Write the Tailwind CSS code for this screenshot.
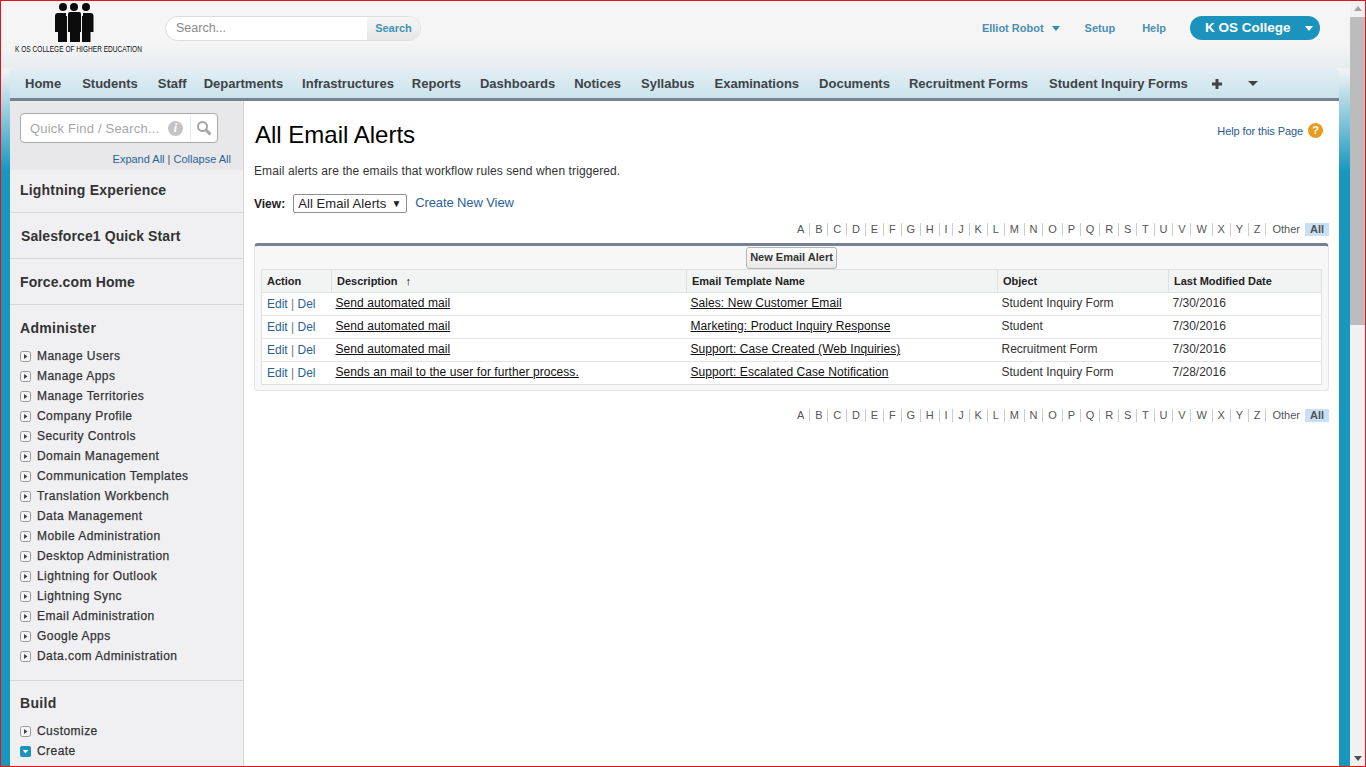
<!DOCTYPE html>
<html lang="en">
<head>
  <meta charset="UTF-8" />
  <title>All Email Alerts</title>
  <script src="https://cdn.jsdelivr.net/npm/@tailwindcss/browser@4"></script>
</head>
<body class="h-[767px] overflow-hidden font-['Liberation_Sans',Arial,sans-serif] text-[12px] text-[#222]">
<div class="relative flex h-[767px] flex-col overflow-hidden border border-[#e0161e] bg-[linear-gradient(#eef2f4_0,#eef2f4_70px,#1797c0_170px)] pr-[15px]">

  <!-- page scrollbar -->
  <div class="absolute top-0 right-0 bottom-0 flex w-[15px] flex-col bg-[#f1f1f1]">
    <div class="mx-auto mt-[5px] h-0 w-0 border-x-[4px] border-b-[5px] border-x-transparent border-b-[#a3a3a3]"></div>
    <div class="mt-[6px] h-[308px] w-[15px] bg-[#bcbcbc]"></div>
    <div class="mx-auto mt-auto mb-[5px] h-0 w-0 border-x-[4px] border-t-[5px] border-x-transparent border-t-[#505050]"></div>
  </div>

  <!-- header -->
  <header class="flex h-[67px] shrink-0 items-start bg-[linear-gradient(#f5f5f6_0,#f5f5f6_42px,#e8ecee_67px)]">
    <div class="flex w-[164px] shrink-0 flex-col items-start pl-[14px]">
      <svg class="mt-[1px] ml-[39px] h-[41px] w-[40px]" viewBox="0 0 40 41" fill="#0c0c0c">
        <circle cx="9" cy="5" r="4"/><circle cx="20" cy="5" r="4"/><circle cx="32" cy="5" r="4"/>
        <path d="M1 14q0-3 3-3h8v3h1v26H4V30H1z"/>
        <path d="M39.500 14q0-3-3-3H29v3h-1v26h8.500V30h3z"/>
        <path d="M14 12q0-2 2-2h9q2 0 2 2v18h-1v10H16V30h-2z"/>
      </svg>
      <span class="mt-[1px] origin-left scale-x-[0.73] text-[9px] leading-[10px] whitespace-nowrap text-[#111]">K OS COLLEGE OF HIGHER EDUCATION</span>
    </div>
    <div class="mt-[15px] flex h-[25px] w-[256px] overflow-hidden rounded-full border border-[#dcdcdc] bg-white">
      <span class="flex-1 pl-[10px] text-[12.5px] leading-[22px] text-[#8a8a8a]">Search...</span>
      <span class="w-[53px] bg-[linear-gradient(#f6f6f6,#e6e6e6)] text-center text-[11px] leading-[23px] font-bold text-[#3f94b8]">Search</span>
    </div>
    <nav class="ml-auto flex items-center pt-[15px] text-[11px] font-bold text-[#4a8fb0]">
      <span class="leading-[23px]">Elliot Robot</span>
      <span class="ml-[8px] h-0 w-0 border-x-[4px] border-t-[5px] border-x-transparent border-t-[#2f8db3]"></span>
      <span class="ml-[25px] leading-[23px]">Setup</span>
      <span class="ml-[27px] leading-[23px]">Help</span>
      <div class="mr-[30px] ml-[24px] flex h-[24px] w-[130px] items-center rounded-full bg-[#1b93bd] pl-[15px] text-[13.5px] text-white">
        <span>K OS College</span>
        <span class="mr-[7px] ml-auto h-0 w-0 border-x-[4px] border-t-[5px] border-x-transparent border-t-white"></span>
      </div>
    </nav>
  </header>

  <!-- tabs -->
  <div class="relative mr-[11px] ml-[9px] flex h-[33px] shrink-0 items-center rounded-t-[5px] border-b-[3px] border-[#76828f] bg-[linear-gradient(#e2eff4,#cbe3ec)] pt-[1px] pl-[15px] text-[13px] font-bold text-[#3f4347]">
    <span class="mr-[21px]">Home</span>
    <span class="mr-[20px]">Students</span>
    <span class="mr-[17px]">Staff</span>
    <span class="mr-[19px]">Departments</span>
    <span class="mr-[18px]">Infrastructures</span>
    <span class="mr-[19px]">Reports</span>
    <span class="mr-[19px]">Dashboards</span>
    <span class="mr-[20px]">Notices</span>
    <span class="mr-[20px]">Syllabus</span>
    <span class="mr-[20px]">Examinations</span>
    <span class="mr-[19px]">Documents</span>
    <span class="mr-[21px]">Recruitment Forms</span>
    <span class="mr-[24px]">Student Inquiry Forms</span>
    <svg class="h-[10px] w-[10px]" viewBox="0 0 10 10" fill="#3f4347"><path d="M3.500 0h3v3.500H10v3H6.500V10h-3V6.500H0v-3h3.500z"/></svg>
    <span class="ml-[26px] h-0 w-0 border-x-[5px] border-t-[5px] border-x-transparent border-t-[#3f4347]"></span>
  </div>

  <!-- main -->
  <div class="mr-[11px] ml-[9px] flex min-h-0 flex-1 bg-white">

    <!-- sidebar -->
    <aside class="w-[234px] shrink-0 border-r-[1px] border-[#d4d4d6] bg-[#f0f0f3] text-[#333]">
      <div class="h-[69px] bg-[#e8e8ea] px-[10px] pt-[12px]">
        <div class="flex h-[30px] w-[198px] items-center rounded-[4px] border border-[#a9a9a9] bg-white pl-[9px]">
          <span class="flex-1 pt-[2px] text-[13px] tracking-[0.2px] whitespace-nowrap text-[#a7a7a7]">Quick Find / Search...</span>
          <span class="mr-[7px] flex h-[15px] w-[15px] items-center justify-center rounded-full bg-[#c4c4c4] font-['Liberation_Serif',serif] text-[12px] font-bold text-white italic">i</span>
          <span class="flex h-full w-[27px] items-center justify-center border-l border-[#ececec]">
            <svg class="h-[16px] w-[16px]" viewBox="0 0 16 16" fill="none" stroke="#a5a5a5"><circle cx="6.500" cy="6.500" r="4.500" stroke-width="2"/><path d="M10 10l4.500 4.500" stroke-width="3"/></svg>
          </span>
        </div>
        <div class="mt-[9px] pr-[2px] text-right text-[11px] leading-[14px] text-[#2a6496]">Expand All <span class="text-[#555]">|</span> Collapse All</div>
      </div>
      <div class="h-[43px] border-b border-[#d8d8da] pl-[10px] text-[14px] leading-[40px] font-bold tracking-[0.2px]">Lightning Experience</div>
      <div class="mt-[3px] h-[43px] border-b border-[#d8d8da] pl-[11px] text-[14px] leading-[40px] font-bold tracking-[0.1px]">Salesforce1 Quick Start</div>
      <div class="mt-[3px] h-[43px] border-b border-[#d8d8da] pl-[10px] text-[14px] leading-[40px] font-bold tracking-[0.1px]">Force.com Home</div>

      <h2 class="mt-[3px] h-[38px] pl-[10px] text-[14px] leading-[40px] font-bold tracking-[0.3px]">Administer</h2>
      <ul class="h-[335px] border-b border-[#d8d8da] pl-[10px] text-[12px] tracking-[0.45px] [-webkit-text-stroke:0.25px_#333]">
        <li class="flex h-[20px] items-center"><svg class="mr-[6px] h-[11px] w-[11px]" viewBox="0 0 11 11"><rect x=".5" y=".5" width="10" height="10" rx="2" fill="#f5f5f5" stroke="#999"/><path d="M4 3l3.500 2.500L4 8z" fill="#444"/></svg>Manage Users</li>
        <li class="flex h-[20px] items-center"><svg class="mr-[6px] h-[11px] w-[11px]" viewBox="0 0 11 11"><rect x=".5" y=".5" width="10" height="10" rx="2" fill="#f5f5f5" stroke="#999"/><path d="M4 3l3.500 2.500L4 8z" fill="#444"/></svg>Manage Apps</li>
        <li class="flex h-[20px] items-center"><svg class="mr-[6px] h-[11px] w-[11px]" viewBox="0 0 11 11"><rect x=".5" y=".5" width="10" height="10" rx="2" fill="#f5f5f5" stroke="#999"/><path d="M4 3l3.500 2.500L4 8z" fill="#444"/></svg>Manage Territories</li>
        <li class="flex h-[20px] items-center"><svg class="mr-[6px] h-[11px] w-[11px]" viewBox="0 0 11 11"><rect x=".5" y=".5" width="10" height="10" rx="2" fill="#f5f5f5" stroke="#999"/><path d="M4 3l3.500 2.500L4 8z" fill="#444"/></svg>Company Profile</li>
        <li class="flex h-[20px] items-center"><svg class="mr-[6px] h-[11px] w-[11px]" viewBox="0 0 11 11"><rect x=".5" y=".5" width="10" height="10" rx="2" fill="#f5f5f5" stroke="#999"/><path d="M4 3l3.500 2.500L4 8z" fill="#444"/></svg>Security Controls</li>
        <li class="flex h-[20px] items-center"><svg class="mr-[6px] h-[11px] w-[11px]" viewBox="0 0 11 11"><rect x=".5" y=".5" width="10" height="10" rx="2" fill="#f5f5f5" stroke="#999"/><path d="M4 3l3.500 2.500L4 8z" fill="#444"/></svg>Domain Management</li>
        <li class="flex h-[20px] items-center"><svg class="mr-[6px] h-[11px] w-[11px]" viewBox="0 0 11 11"><rect x=".5" y=".5" width="10" height="10" rx="2" fill="#f5f5f5" stroke="#999"/><path d="M4 3l3.500 2.500L4 8z" fill="#444"/></svg>Communication Templates</li>
        <li class="flex h-[20px] items-center"><svg class="mr-[6px] h-[11px] w-[11px]" viewBox="0 0 11 11"><rect x=".5" y=".5" width="10" height="10" rx="2" fill="#f5f5f5" stroke="#999"/><path d="M4 3l3.500 2.500L4 8z" fill="#444"/></svg>Translation Workbench</li>
        <li class="flex h-[20px] items-center"><svg class="mr-[6px] h-[11px] w-[11px]" viewBox="0 0 11 11"><rect x=".5" y=".5" width="10" height="10" rx="2" fill="#f5f5f5" stroke="#999"/><path d="M4 3l3.500 2.500L4 8z" fill="#444"/></svg>Data Management</li>
        <li class="flex h-[20px] items-center"><svg class="mr-[6px] h-[11px] w-[11px]" viewBox="0 0 11 11"><rect x=".5" y=".5" width="10" height="10" rx="2" fill="#f5f5f5" stroke="#999"/><path d="M4 3l3.500 2.500L4 8z" fill="#444"/></svg>Mobile Administration</li>
        <li class="flex h-[20px] items-center"><svg class="mr-[6px] h-[11px] w-[11px]" viewBox="0 0 11 11"><rect x=".5" y=".5" width="10" height="10" rx="2" fill="#f5f5f5" stroke="#999"/><path d="M4 3l3.500 2.500L4 8z" fill="#444"/></svg>Desktop Administration</li>
        <li class="flex h-[20px] items-center"><svg class="mr-[6px] h-[11px] w-[11px]" viewBox="0 0 11 11"><rect x=".5" y=".5" width="10" height="10" rx="2" fill="#f5f5f5" stroke="#999"/><path d="M4 3l3.500 2.500L4 8z" fill="#444"/></svg>Lightning for Outlook</li>
        <li class="flex h-[20px] items-center"><svg class="mr-[6px] h-[11px] w-[11px]" viewBox="0 0 11 11"><rect x=".5" y=".5" width="10" height="10" rx="2" fill="#f5f5f5" stroke="#999"/><path d="M4 3l3.500 2.500L4 8z" fill="#444"/></svg>Lightning Sync</li>
        <li class="flex h-[20px] items-center"><svg class="mr-[6px] h-[11px] w-[11px]" viewBox="0 0 11 11"><rect x=".5" y=".5" width="10" height="10" rx="2" fill="#f5f5f5" stroke="#999"/><path d="M4 3l3.500 2.500L4 8z" fill="#444"/></svg>Email Administration</li>
        <li class="flex h-[20px] items-center"><svg class="mr-[6px] h-[11px] w-[11px]" viewBox="0 0 11 11"><rect x=".5" y=".5" width="10" height="10" rx="2" fill="#f5f5f5" stroke="#999"/><path d="M4 3l3.500 2.500L4 8z" fill="#444"/></svg>Google Apps</li>
        <li class="flex h-[20px] items-center"><svg class="mr-[6px] h-[11px] w-[11px]" viewBox="0 0 11 11"><rect x=".5" y=".5" width="10" height="10" rx="2" fill="#f5f5f5" stroke="#999"/><path d="M4 3l3.500 2.500L4 8z" fill="#444"/></svg>Data.com Administration</li>
      </ul>

      <h2 class="mt-[2px] h-[38px] pl-[10px] text-[14px] leading-[40px] font-bold tracking-[0.3px]">Build</h2>
      <ul class="pl-[10px] text-[12px] tracking-[0.45px] [-webkit-text-stroke:0.25px_#333]">
        <li class="flex h-[20px] items-center"><svg class="mr-[6px] h-[11px] w-[11px]" viewBox="0 0 11 11"><rect x=".5" y=".5" width="10" height="10" rx="2" fill="#f5f5f5" stroke="#999"/><path d="M4 3l3.500 2.500L4 8z" fill="#444"/></svg>Customize</li>
        <li class="flex h-[20px] items-center"><svg class="mr-[6px] h-[11px] w-[11px]" viewBox="0 0 11 11"><rect width="11" height="11" rx="2" fill="#1b93bd"/><path d="M2.800 4h5.400L5.500 7.500z" fill="#fff"/></svg>Create</li>
      </ul>
    </aside>

    <!-- content -->
    <main class="min-w-0 flex-1 pr-[10px] pl-[10px]">
      <div class="flex h-[62px] items-start justify-between">
        <h1 class="mt-[19px] ml-[1px] text-[24px] leading-[30px] text-black">All Email Alerts</h1>
        <div class="mt-[22px] flex items-center text-[11px] tracking-[-0.1px] text-[#1f5a8a]">
          Help for this Page
          <span class="mr-[6px] ml-[5px] flex h-[15px] w-[15px] -translate-y-[1px] items-center justify-center rounded-full bg-[#e89b1c] text-[11px] font-bold text-white">?</span>
        </div>
      </div>
      <p class="h-[17px] leading-[17px] tracking-[0.1px] text-[#333]">Email alerts are the emails that workflow rules send when triggered.</p>
      <div class="mt-[14px] flex h-[19px] items-center">
        <span class="font-bold">View:</span>
        <div class="ml-[8px] flex h-[19px] w-[114px] items-center rounded-[2px] border border-[#8f8f8f] bg-white pl-[4px] text-[13px] tracking-[0.1px] whitespace-nowrap">All Email Alerts<span class="ml-[5px] text-[10px]">▼</span></div>
        <span class="ml-[8px] -translate-y-[1px] text-[13px] tracking-[-0.1px] text-[#2a5f96]">Create New View</span>
      </div>

      <!-- letters -->
      <div class="mt-[10px] flex h-[13px] items-center justify-end text-[11px] leading-[13px] text-[#555]">
        <span class="border-r border-[#ccc] px-[4.9px]">A</span><span class="border-r border-[#ccc] px-[4.9px]">B</span><span class="border-r border-[#ccc] px-[4.9px]">C</span><span class="border-r border-[#ccc] px-[4.9px]">D</span><span class="border-r border-[#ccc] px-[4.9px]">E</span><span class="border-r border-[#ccc] px-[4.9px]">F</span><span class="border-r border-[#ccc] px-[4.9px]">G</span><span class="border-r border-[#ccc] px-[4.9px]">H</span><span class="border-r border-[#ccc] px-[4.9px]">I</span><span class="border-r border-[#ccc] px-[4.9px]">J</span><span class="border-r border-[#ccc] px-[4.9px]">K</span><span class="border-r border-[#ccc] px-[4.9px]">L</span><span class="border-r border-[#ccc] px-[4.9px]">M</span><span class="border-r border-[#ccc] px-[4.9px]">N</span><span class="border-r border-[#ccc] px-[4.9px]">O</span><span class="border-r border-[#ccc] px-[4.9px]">P</span><span class="border-r border-[#ccc] px-[4.9px]">Q</span><span class="border-r border-[#ccc] px-[4.9px]">R</span><span class="border-r border-[#ccc] px-[4.9px]">S</span><span class="border-r border-[#ccc] px-[4.9px]">T</span><span class="border-r border-[#ccc] px-[4.9px]">U</span><span class="border-r border-[#ccc] px-[4.9px]">V</span><span class="border-r border-[#ccc] px-[4.9px]">W</span><span class="border-r border-[#ccc] px-[4.9px]">X</span><span class="border-r border-[#ccc] px-[4.9px]">Y</span><span class="border-r border-[#ccc] px-[4.9px]">Z</span>
        <span class="pr-[5px] pl-[6px]">Other</span><span class="bg-[#c9dff5] px-[5px] font-bold">All</span>
      </div>

      <!-- list -->
      <section class="mt-[7px] h-[148px] rounded-[4px] border border-t-[3px] border-[#e4e4e4] border-t-[#76828f] bg-[#f7f7f8] px-[6px]">
        <div class="flex h-[23px] items-center justify-center">
          <button class="h-[22px] rounded-[3px] border border-[#b5b5b5] bg-[linear-gradient(#fdfdfd,#e8e8e8)] px-[3px] text-[11px] font-bold text-[#333]">New Email Alert</button>
        </div>
        <table class="w-full table-fixed border border-[#e0e0e0] bg-white text-[12px] text-[#333]">
          <colgroup><col class="w-[70px]"><col class="w-[355px]"><col class="w-[311px]"><col class="w-[171px]"><col></colgroup>
          <thead>
            <tr class="h-[23px] bg-[#f2f3f3] text-left text-[11px] font-bold text-[#222]">
              <th class="border-r border-[#e0e0e0] pl-[5px]">Action</th>
              <th class="border-r border-[#e0e0e0] pl-[5px]">Description <span class="ml-[5px] text-[11px] text-black">↑</span></th>
              <th class="border-r border-[#e0e0e0] pl-[5px]">Email Template Name</th>
              <th class="border-r border-[#e0e0e0] pl-[5px]">Object</th>
              <th class="pl-[5px]">Last Modified Date</th>
            </tr>
          </thead>
          <tbody>
            <tr class="h-[23px] border-t border-[#e3e3e3]">
              <td class="pl-[5px] text-[#2a5f96]">Edit <span class="text-[#777]">|</span> Del</td>
              <td class="pb-[2px] pl-[4px] tracking-[0.07px]"><span class="text-[#111] underline">Send automated mail</span></td>
              <td class="pb-[2px] pl-[4px] tracking-[0.07px]"><span class="text-[#111] underline">Sales: New Customer Email</span></td>
              <td class="pb-[2px] pl-[4px]">Student Inquiry Form</td>
              <td class="pb-[2px] pl-[4px]">7/30/2016</td>
            </tr>
            <tr class="h-[23px] border-t border-[#e3e3e3]">
              <td class="pl-[5px] text-[#2a5f96]">Edit <span class="text-[#777]">|</span> Del</td>
              <td class="pb-[2px] pl-[4px] tracking-[0.07px]"><span class="text-[#111] underline">Send automated mail</span></td>
              <td class="pb-[2px] pl-[4px] tracking-[0.07px]"><span class="text-[#111] underline">Marketing: Product Inquiry Response</span></td>
              <td class="pb-[2px] pl-[4px]">Student</td>
              <td class="pb-[2px] pl-[4px]">7/30/2016</td>
            </tr>
            <tr class="h-[23px] border-t border-[#e3e3e3]">
              <td class="pl-[5px] text-[#2a5f96]">Edit <span class="text-[#777]">|</span> Del</td>
              <td class="pb-[2px] pl-[4px] tracking-[0.07px]"><span class="text-[#111] underline">Send automated mail</span></td>
              <td class="pb-[2px] pl-[4px] tracking-[0.07px]"><span class="text-[#111] underline">Support: Case Created (Web Inquiries)</span></td>
              <td class="pb-[2px] pl-[4px]">Recruitment Form</td>
              <td class="pb-[2px] pl-[4px]">7/30/2016</td>
            </tr>
            <tr class="h-[23px] border-t border-[#e3e3e3]">
              <td class="pl-[5px] text-[#2a5f96]">Edit <span class="text-[#777]">|</span> Del</td>
              <td class="pb-[2px] pl-[4px] tracking-[0.07px]"><span class="text-[#111] underline">Sends an mail to the user for further process.</span></td>
              <td class="pb-[2px] pl-[4px] tracking-[0.07px]"><span class="text-[#111] underline">Support: Escalated Case Notification</span></td>
              <td class="pb-[2px] pl-[4px]">Student Inquiry Form</td>
              <td class="pb-[2px] pl-[4px]">7/28/2016</td>
            </tr>
          </tbody>
        </table>
      </section>

      <div class="mt-[18px] flex h-[13px] items-center justify-end text-[11px] leading-[13px] text-[#555]">
        <span class="border-r border-[#ccc] px-[4.9px]">A</span><span class="border-r border-[#ccc] px-[4.9px]">B</span><span class="border-r border-[#ccc] px-[4.9px]">C</span><span class="border-r border-[#ccc] px-[4.9px]">D</span><span class="border-r border-[#ccc] px-[4.9px]">E</span><span class="border-r border-[#ccc] px-[4.9px]">F</span><span class="border-r border-[#ccc] px-[4.9px]">G</span><span class="border-r border-[#ccc] px-[4.9px]">H</span><span class="border-r border-[#ccc] px-[4.9px]">I</span><span class="border-r border-[#ccc] px-[4.9px]">J</span><span class="border-r border-[#ccc] px-[4.9px]">K</span><span class="border-r border-[#ccc] px-[4.9px]">L</span><span class="border-r border-[#ccc] px-[4.9px]">M</span><span class="border-r border-[#ccc] px-[4.9px]">N</span><span class="border-r border-[#ccc] px-[4.9px]">O</span><span class="border-r border-[#ccc] px-[4.9px]">P</span><span class="border-r border-[#ccc] px-[4.9px]">Q</span><span class="border-r border-[#ccc] px-[4.9px]">R</span><span class="border-r border-[#ccc] px-[4.9px]">S</span><span class="border-r border-[#ccc] px-[4.9px]">T</span><span class="border-r border-[#ccc] px-[4.9px]">U</span><span class="border-r border-[#ccc] px-[4.9px]">V</span><span class="border-r border-[#ccc] px-[4.9px]">W</span><span class="border-r border-[#ccc] px-[4.9px]">X</span><span class="border-r border-[#ccc] px-[4.9px]">Y</span><span class="border-r border-[#ccc] px-[4.9px]">Z</span>
        <span class="pr-[5px] pl-[6px]">Other</span><span class="bg-[#c9dff5] px-[5px] font-bold">All</span>
      </div>
    </main>
  </div>
</div>
</body>
</html>
